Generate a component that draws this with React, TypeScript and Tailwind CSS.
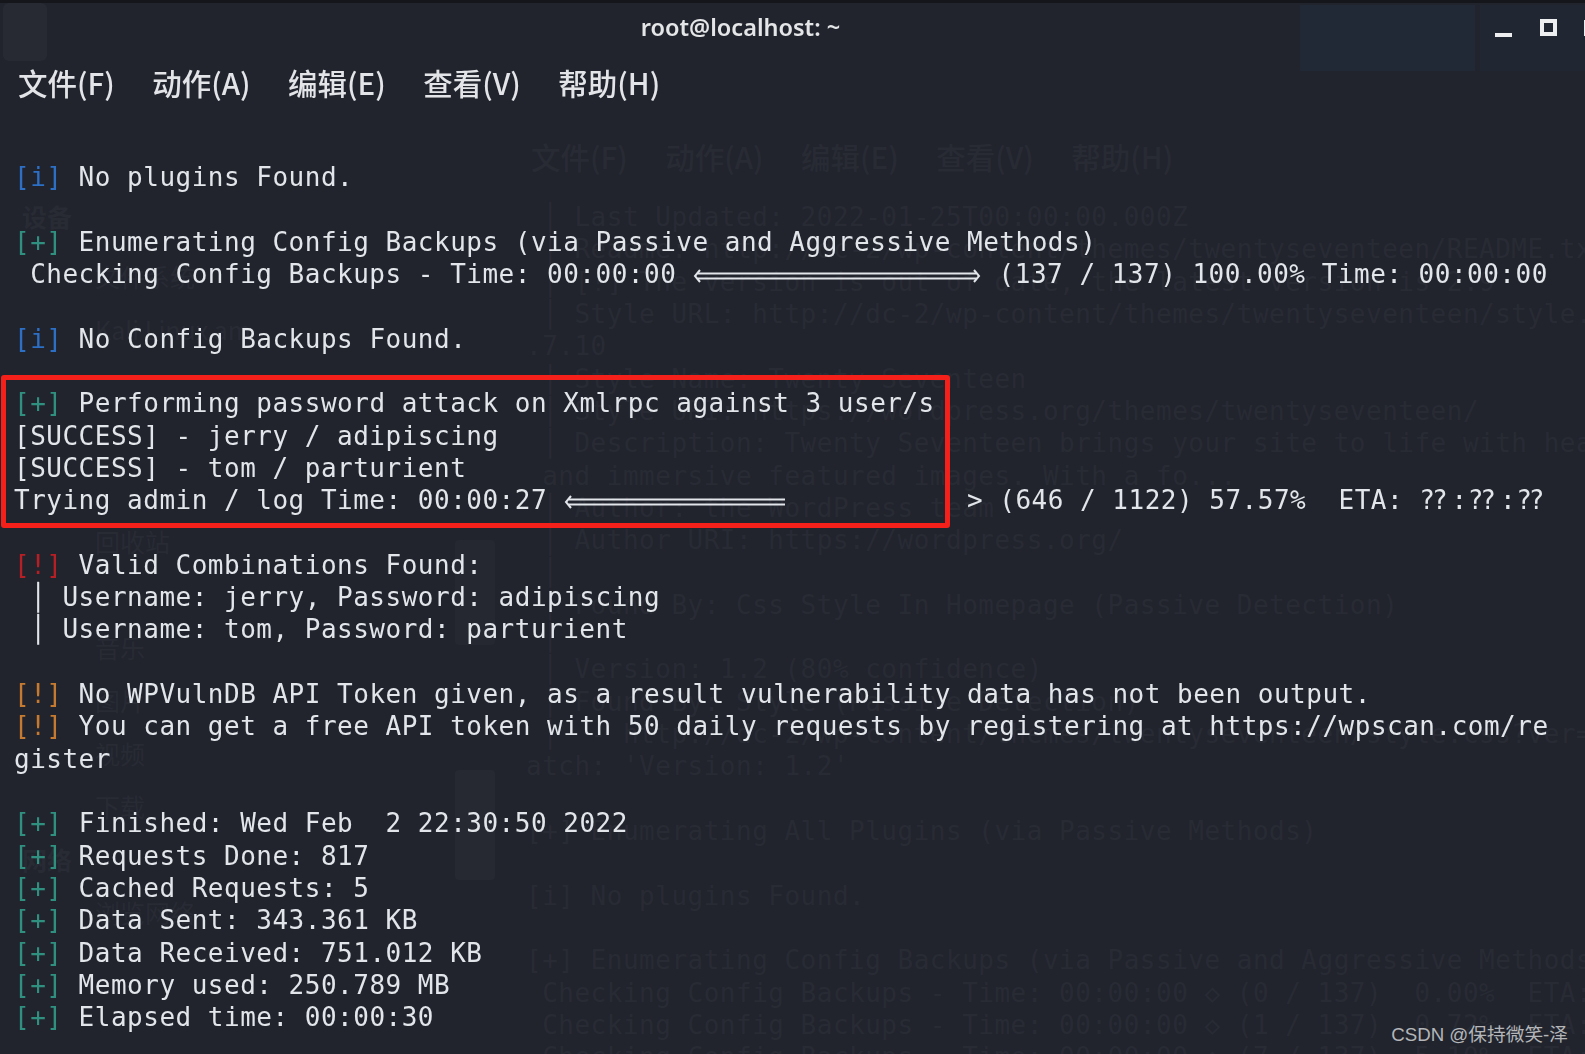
const ghostRows = [
  ' │ Last Updated: 2022-01-25T00:00:00.000Z',
  ' │ Readme: http://dc-2/wp-content/themes/twentyseventeen/README.txt',
  ' │ [!] The version is out of date, the latest version is 2.9',
  ' │ Style URL: http://dc-2/wp-content/themes/twentyseventeen/style.css?ver=5',
  '.7.10',
  ' │ Style Name: Twenty Seventeen',
  ' │ Style URI: https://wordpress.org/themes/twentyseventeen/',
  ' │ Description: Twenty Seventeen brings your site to life with header video',
  ' and immersive featured images. With a fo...',
  ' │ Author: the WordPress team',
  ' │ Author URI: https://wordpress.org/',
  ' │',
  ' │ Found By: Css Style In Homepage (Passive Detection)',
  ' │',
  ' │ Version: 1.2 (80% confidence)',
  ' │ Found By: Style (Passive Detection)',
  ' │  - http://dc-2/wp-content/themes/twentyseventeen/style.css?ver=5.7.10, M',
  "atch: 'Version: 1.2'",
  '',
  '[+] Enumerating All Plugins (via Passive Methods)',
  '',
  '[i] No plugins Found.',
  '',
  '[+] Enumerating Config Backups (via Passive and Aggressive Methods)',
  ' Checking Config Backups - Time: 00:00:00 ◇ (0 / 137)  0.00%  ETA: ??:??',
  ' Checking Config Backups - Time: 00:00:00 ◇ (1 / 137)  0.72%  ETA: ??:??',
  ' Checking Config Backups - Time: 00:00:00 ◇ (7 / 137)  5.10%  ETA: ??:??',
]

const ghostSidebar = ['文件系统', 'Kali Linux am', '', '', '', '回收站', '', '音乐', '图片', '视频', '下载']

const menu = ['文件(F)', '动作(A)', '编辑(E)', '查看(V)', '帮助(H)']

function Tag({ color, mark }: { color: string; mark: string }) {
  return <span className={color}>{`[${mark}]`}</span>
}

const plus = <Tag color="text-[#2f9080]" mark="+" />
const info = <Tag color="text-[#2c6fc4]" mark="i" />
const warn = <Tag color="text-[#c67a30]" mark="!" />
const crit = <Tag color="text-[#b81f24]" mark="!" />

function Row({ children }: { children?: React.ReactNode }) {
  return <div className="h-[32.32px] leading-[32.32px] whitespace-pre">{children}</div>
}

function Menu() {
  return (
    <div className="flex gap-[37.5px] text-[29.5px] font-medium font-['Noto_Sans_CJK_SC',sans-serif]">
      {menu.map((item) => (
        <span key={item}>{item}</span>
      ))}
    </div>
  )
}

function Arrow({ width, right }: { width: number; right?: boolean }) {
  return (
    <svg width={width} height={16} viewBox={`0 0 ${width} 16`} className="inline-block align-[-1px]" fill="none" stroke="#e2e6ea" strokeWidth={2}>
      <path d={`M6 5.5H${right ? width - 6 : width}M6 10.5H${right ? width - 6 : width}`} />
      <path d="M8 2L3 8L8 14" />
      {right && <path d={`M${width - 8} 2L${width - 3} 8L${width - 8} 14`} />}
    </svg>
  )
}

function Unknown() {
  return <span className="inline-block w-[32.3px] text-left tracking-[-3px]">??</span>
}

function GhostLayer() {
  return (
    <div className="absolute inset-0 text-[#282b34]">
      <div className="absolute left-[1300px] top-[5px] w-[175px] h-[66px] bg-[#222936]" />
      <div className="absolute left-[1480px] top-[5px] w-[105px] h-[66px] bg-[#212633]" />
      <div className="absolute left-[3px] top-[3px] w-[44px] h-[58px] rounded-md bg-[#272a33]" />
      <div className="absolute left-[455px] top-[770px] w-[40px] h-[110px] rounded bg-[#262932]" />
      <div className="absolute left-[455px] top-[540px] w-[40px] h-[105px] rounded bg-[#252831]" />

      <div className="absolute left-[22px] top-[198px] w-[220px] text-[25px] tracking-normal font-['Noto_Sans_CJK_SC',sans-serif]">
        <div className="h-[60px] font-bold">设备</div>
        <div className="flex flex-col pl-[73px]">
          {ghostSidebar.map((label, i) => (
            <div key={i} className="h-[53px] whitespace-nowrap">{label}</div>
          ))}
        </div>
        <div className="h-[53px] font-bold">网络</div>
        <div className="h-[53px] pl-[73px]">浏览网络</div>
      </div>

      <div className="absolute left-[531px] top-[134px] tracking-normal">
        <Menu />
      </div>
      <div className="absolute left-[526px] top-[201px]">
        {ghostRows.map((row, i) => (
          <Row key={i}>{row}</Row>
        ))}
      </div>
    </div>
  )
}

export default function App() {
  return (
    <div className="relative w-[1585px] h-[1054px] overflow-hidden bg-[#21242d] text-[#e2e6ea] text-[26px] tracking-[0.5px] font-['DejaVu_Sans_Mono',monospace]">
      <GhostLayer />
      <div className="absolute inset-x-0 top-0 h-[3px] bg-[#14161c]" />

      <div className="relative blur-[0.35px]">
        <div className="flex items-center h-[55px] tracking-normal">
          <div className="w-[1481px] shrink-0 text-center text-[23.5px] font-semibold text-[#e4e5e7] font-['Noto_Sans',sans-serif]">
            root@localhost: ~
          </div>
          <div className="ml-[14px] mt-[14px] w-[17px] h-[4px] shrink-0 bg-[#eceef0]" />
          <div className="ml-[28px] w-[17px] h-[17px] shrink-0 border-[4px] border-[#eceef0]" />
          <div className="ml-[27px] w-[4px] h-[16px] shrink-0 bg-[#eceef0]" />
        </div>

        <div className="flex h-[55px] items-center pl-[18px] tracking-normal text-[#e2e4e8]">
          <Menu />
        </div>

        <div className="pl-[14px] pt-[51px]">
          <Row>{info} No plugins Found.</Row>
          <Row />
          <Row>{plus} Enumerating Config Backups (via Passive and Aggressive Methods)</Row>
          <Row>
            {' Checking Config Backups - Time: 00:00:00 '}
            <Arrow width={290} right /> {'(137 / 137) 100.00% Time: 00:00:00'}
          </Row>
          <Row />
          <Row>{info} No Config Backups Found.</Row>
          <Row />
          <Row>{plus} Performing password attack on Xmlrpc against 3 user/s</Row>
          <Row>[SUCCESS] - jerry / adipiscing</Row>
          <Row>[SUCCESS] - tom / parturient</Row>
          <Row>
            {'Trying admin / log Time: 00:00:27 '}
            <span className="inline-block w-[403.75px]">
              <Arrow width={222} />
            </span>
            {'> (646 / 1122) 57.57%  ETA: '}
            <Unknown />:<Unknown />:<Unknown />
          </Row>
          <Row />
          <Row>{crit} Valid Combinations Found:</Row>
          <Row>{' │ Username: jerry, Password: adipiscing'}</Row>
          <Row>{' │ Username: tom, Password: parturient'}</Row>
          <Row />
          <Row>{warn} No WPVulnDB API Token given, as a result vulnerability data has not been output.</Row>
          <Row>{warn} You can get a free API token with 50 daily requests by registering at https://wpscan.com/re</Row>
          <Row>gister</Row>
          <Row />
          <Row>{plus} {'Finished: Wed Feb  2 22:30:50 2022'}</Row>
          <Row>{plus} Requests Done: 817</Row>
          <Row>{plus} Cached Requests: 5</Row>
          <Row>{plus} Data Sent: 343.361 KB</Row>
          <Row>{plus} Data Received: 751.012 KB</Row>
          <Row>{plus} Memory used: 250.789 MB</Row>
          <Row>{plus} Elapsed time: 00:00:30</Row>
        </div>
      </div>

      {/* annotation drawn on top of the screenshot */}
      <div className="absolute left-[1px] top-[375px] w-[949px] h-[153px] rounded-[3px] border-[5px] border-[#f5201a]" />

      <div className="absolute right-[17px] top-[1021px] text-[18.7px] tracking-normal leading-[28px] text-[#b4b6b9] font-['Liberation_Sans','Noto_Sans_CJK_SC',sans-serif]">
        CSDN @保持微笑-泽
      </div>
    </div>
  )
}
